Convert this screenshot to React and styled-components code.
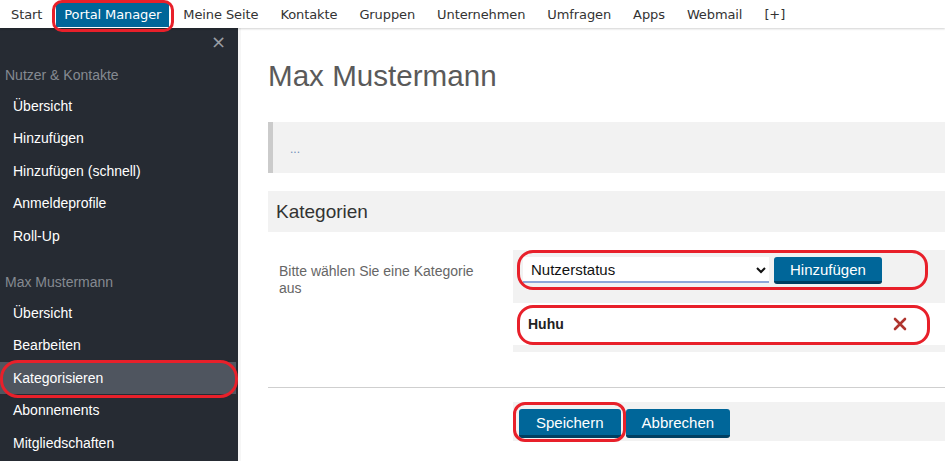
import React, { useState } from "react";
import styled, { createGlobalStyle } from "styled-components";

const GlobalStyle = createGlobalStyle`
  body {
    margin: 0;
    background: #fff;
    font-family: "Liberation Sans", Arial, sans-serif;
  }
  * { box-sizing: border-box; }
`;

const Page = styled.div`
  width: 945px;
  height: 461px;
  overflow: hidden;
  display: flex;
  flex-direction: column;
`;

const TopNav = styled.nav`
  height: 28px;
  display: flex;
  align-items: flex-end;
  gap: 6px;
  padding-left: 3px;
  background: #fff;
  box-shadow: 0 1px 2px rgba(0, 0, 0, 0.18);
  position: relative;
  z-index: 2;
  font-family: "DejaVu Sans", Verdana, sans-serif;
  font-size: 13px;
`;

const NavItem = styled.a`
  position: relative;
  height: 24px;
  line-height: 24px;
  padding: 0 8px;
  margin-bottom: 1px;
  color: ${(p) => (p.$active ? "#fff" : "#333")};
  background: ${(p) => (p.$active ? "#006699" : "transparent")};
  text-decoration: none;
  white-space: nowrap;
  letter-spacing: -0.1px;
`;

const Highlight = styled.span`
  position: absolute;
  top: ${(p) => p.$t}px;
  right: ${(p) => p.$r}px;
  bottom: ${(p) => p.$b}px;
  left: ${(p) => p.$l}px;
  border: 3px solid #e8202a;
  border-radius: ${(p) => p.$radius || 14}px;
  pointer-events: none;
  z-index: 5;
`;

const Body = styled.div`
  flex: 1;
  display: flex;
  min-height: 0;
`;

const Sidebar = styled.aside`
  width: 238px;
  flex-shrink: 0;
  background: #262b33;
  font-size: 14px;
`;

const CloseRow = styled.div`
  height: 26px;
  display: flex;
  justify-content: flex-end;
  align-items: center;
  padding-right: 12px;
  color: #9a9ea4;
  font-size: 18px;
  font-family: "DejaVu Sans", sans-serif;
`;

const SideHeading = styled.div`
  padding: ${(p) => p.$top}px 5px 7px;
  line-height: 16px;
  color: #858a91;
`;

const SideItem = styled.div`
  position: relative;
  height: 32.4px;
  line-height: 32px;
  padding-left: 13px;
  color: #fff;
  background: ${(p) => (p.$active ? "#4f555f" : "transparent")};
  margin-right: ${(p) => (p.$active ? "2px" : "0")};
`;

const Main = styled.main`
  flex: 1;
  padding: 32px 0 0 30px;
  border-left: 3px solid #f6f6f6;
`;

const Title = styled.h1`
  margin: 0 0 30px -3px;
  font-size: 29.6px;
  line-height: 32px;
  font-weight: normal;
  color: #5a5a5a;
`;

const InfoBox = styled.div`
  height: 51px;
  margin-left: -3px;
  background: #f2f2f2;
  border-left: 5px solid #cbcbcb;
  padding: 20px 0 0 17px;
  color: #6f8fb8;
  font-size: 12px;
`;

const SectionHeader = styled.h2`
  margin: 18px 0 0 -3px;
  height: 41px;
  line-height: 41px;
  padding-left: 8px;
  background: #f2f2f2;
  font-size: 19px;
  font-weight: normal;
  color: #333;
`;

const FormRow = styled.div`
  display: flex;
  margin: 18px 0 0 -3px;
`;

const Label = styled.div`
  width: 245px;
  padding: 13px 25px 0 11px;
  font-size: 14px;
  line-height: 17px;
  color: #666;
`;

const Field = styled.div`
  flex: 1;
  background: #f2f2f2;
  padding-bottom: 7px;
`;

const SelectRow = styled.div`
  position: relative;
  display: flex;
  gap: 5px;
  padding: 7px 10px 19px;
`;

const Select = styled.select`
  width: 246px;
  height: 26px;
  border: none;
  border-bottom: 2px solid #8ea7d8;
  background: #fff;
  font-family: "Liberation Sans", Arial, sans-serif;
  font-size: 15px;
  color: #111;
  padding-left: 4px;
  outline: none;
`;

const Button = styled.button`
  position: relative;
  height: ${(p) => p.$h || 27}px;
  padding: 0 ${(p) => p.$px || 16}px;
  background: #006699;
  color: #fff;
  border: none;
  border-bottom: 3px solid #003f61;
  border-radius: 3px;
  font-family: "Liberation Sans", Arial, sans-serif;
  font-size: 15px;
  cursor: pointer;
`;

const TagRow = styled.div`
  position: relative;
  height: 42px;
  background: #fff;
  display: flex;
  align-items: center;
  justify-content: space-between;
  padding: 0 38px 0 15px;
  font-size: 14px;
  font-weight: bold;
  color: #222;
`;

const Divider = styled.hr`
  margin: 35px 0 0 -3px;
  border: none;
  border-top: 1px solid #cfcfcf;
`;

const Actions = styled.div`
  margin: 14px 0 0 242px;
  height: 39px;
  background: #f2f2f2;
  display: flex;
  align-items: flex-start;
  gap: 5px;
  padding: 7px 0 0 6px;
`;

const RemoveIcon = () => (
  <svg width="14" height="14" viewBox="0 0 14 14">
    <path d="M2 2 L12 12 M12 2 L2 12" stroke="#b0352f" strokeWidth="2.6" strokeLinecap="round" />
  </svg>
);

const navItems = [
  "Start",
  "Portal Manager",
  "Meine Seite",
  "Kontakte",
  "Gruppen",
  "Unternehmen",
  "Umfragen",
  "Apps",
  "Webmail",
  "[+]",
];

const userLinks = ["Übersicht", "Hinzufügen", "Hinzufügen (schnell)", "Anmeldeprofile", "Roll-Up"];
const personLinks = ["Übersicht", "Bearbeiten", "Kategorisieren", "Abonnements", "Mitgliedschaften"];

export default function App() {
  const [category, setCategory] = useState("Nutzerstatus");

  return (
    <Page>
      <GlobalStyle />
      <TopNav>
        {navItems.map((item) => (
          <NavItem key={item} $active={item === "Portal Manager"}>
            {item}
            {item === "Portal Manager" && <Highlight $t={-3} $r={-5} $b={-5} $l={-4} $radius={10} />}
          </NavItem>
        ))}
      </TopNav>
      <Body>
        <Sidebar>
          <CloseRow>×</CloseRow>
          <SideHeading $top={13}>Nutzer &amp; Kontakte</SideHeading>
          {userLinks.map((l) => (
            <SideItem key={l}>{l}</SideItem>
          ))}
          <SideHeading $top={22}>Max Mustermann</SideHeading>
          {personLinks.map((l) => (
            <SideItem key={l} $active={l === "Kategorisieren"}>
              {l}
              {l === "Kategorisieren" && <Highlight $t={-2} $r={-2} $b={-4} $l={0} $radius={18} />}
            </SideItem>
          ))}
        </Sidebar>
        <Main>
          <Title>Max Mustermann</Title>
          <InfoBox>...</InfoBox>
          <SectionHeader>Kategorien</SectionHeader>
          <FormRow>
            <Label>Bitte wählen Sie eine Kategorie aus</Label>
            <Field>
              <SelectRow>
                <Select value={category} onChange={(e) => setCategory(e.target.value)}>
                  <option>Nutzerstatus</option>
                  <option>Mitglied</option>
                </Select>
                <Button $px={16}>Hinzufügen</Button>
                <Highlight $t={0} $r={17} $b={13} $l={4} $radius={16} />
              </SelectRow>
              <TagRow>
                Huhu
                <RemoveIcon />
                <Highlight $t={2} $r={15} $b={0} $l={4} $radius={16} />
              </TagRow>
            </Field>
          </FormRow>
          <Divider />
          <Actions>
            <Button $h={29} $px={17}>
              Speichern
              <Highlight $t={-7} $r={-5} $b={-7} $l={-6} $radius={12} />
            </Button>
            <Button $h={29} $px={16}>Abbrechen</Button>
          </Actions>
        </Main>
      </Body>
    </Page>
  );
}
